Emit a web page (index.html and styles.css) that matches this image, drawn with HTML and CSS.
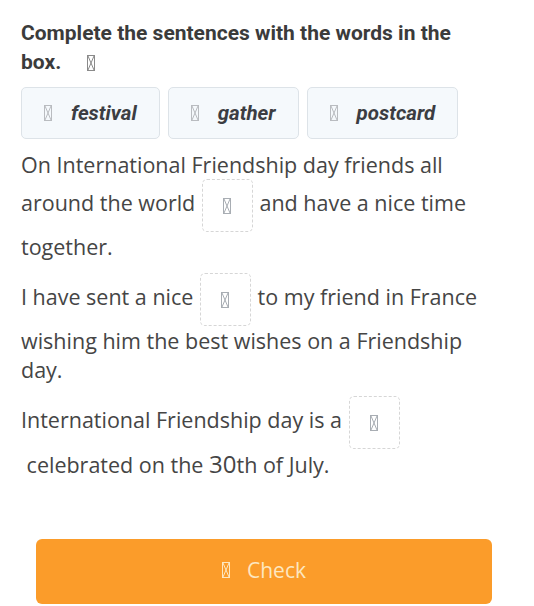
FILE: index.html
```html
<!DOCTYPE html>
<html>
<head>
<meta charset="utf-8">
<link rel="stylesheet" href="styles.css">
</head>
<body>
<div class="page">
  <h1 class="title">Complete the sentences with the words in the box.<svg class="tofu tofu-title" viewBox="0 0 8 16"><rect x="0.5" y="0.5" width="7" height="15"/><path d="M1 1 L7 15 M7 1 L1 15"/></svg></h1>
  <div class="chips">
    <div class="chip"><svg class="tofu tofu-chip" viewBox="0 0 8 16"><rect x="0.5" y="0.5" width="7" height="15"/><path d="M1 1 L7 15 M7 1 L1 15"/></svg><span>festival</span></div>
    <div class="chip"><svg class="tofu tofu-chip" viewBox="0 0 8 16"><rect x="0.5" y="0.5" width="7" height="15"/><path d="M1 1 L7 15 M7 1 L1 15"/></svg><span>gather</span></div>
    <div class="chip"><svg class="tofu tofu-chip" viewBox="0 0 8 16"><rect x="0.5" y="0.5" width="7" height="15"/><path d="M1 1 L7 15 M7 1 L1 15"/></svg><span>postcard</span></div>
  </div>
  <p class="sentence">On International Friendship day friends all around the world <span class="blank"><svg class="tofu tofu-blank" viewBox="0 0 8 16"><rect x="0.5" y="0.5" width="7" height="15"/><path d="M1 1 L7 15 M7 1 L1 15"/></svg></span> and have a nice time together.</p>
  <p class="sentence">I have sent a nice <span class="blank"><svg class="tofu tofu-blank" viewBox="0 0 8 16"><rect x="0.5" y="0.5" width="7" height="15"/><path d="M1 1 L7 15 M7 1 L1 15"/></svg></span> to my friend in France wishing him the best wishes on a Friendship day.</p>
  <p class="sentence">International Friendship day is a <span class="blank"><svg class="tofu tofu-blank" viewBox="0 0 8 16"><rect x="0.5" y="0.5" width="7" height="15"/><path d="M1 1 L7 15 M7 1 L1 15"/></svg></span> &nbsp;celebrated on the <span class="num">30</span>th of July.</p>
  <button class="check"><svg class="tofu tofu-btn" viewBox="0 0 8 16"><rect x="0.5" y="0.5" width="7" height="15"/><path d="M1 1 L7 15 M7 1 L1 15"/></svg><span>Check</span></button>
</div>
</body>
</html>
```
FILE: styles.css
```css
* { box-sizing: border-box; }
html, body { margin: 0; padding: 0; background: #fff; }
.page {
  padding: 19px 0 0 21px;
  width: 490px;
}
.title {
  font-family: Roboto, "Liberation Sans", sans-serif;
  font-weight: 700;
  font-size: 21px;
  line-height: 29px;
  color: #3b3b3b;
  margin: 0;
}
.tofu {
  fill: none;
  stroke-width: 1;
  display: inline-block;
}
.tofu-title {
  width: 8px;
  height: 16px;
  margin-left: 26px;
  stroke: #8a8a8a;
  vertical-align: -2px;
}
.chips {
  display: flex;
  gap: 8px;
  margin-top: 10px;
}
.chip {
  height: 52px;
  display: flex;
  align-items: center;
  gap: 19px;
  padding: 0 22px 0 22px;
  background: #f5f9fc;
  border: 1px solid #dde3e8;
  border-radius: 5px;
  font-family: Roboto, "Liberation Sans", sans-serif;
  font-weight: 700;
  font-style: italic;
  font-size: 20.5px;
  color: #3b3d42;
}
.tofu-chip {
  width: 8px;
  height: 16px;
  stroke: #b9bcc0;
}
.sentence {
  font-family: "Open Sans", "Liberation Sans", sans-serif;
  font-size: 21.5px;
  line-height: 29px;
  color: #454545;
  margin: 11px 0 12px;
}
.blank {
  display: inline-flex;
  align-items: center;
  justify-content: center;
  width: 51px;
  height: 53px;
  border: 1px dashed #d6d6d6;
  border-radius: 5px;
  vertical-align: middle;
  margin: 0 1px;
}
.tofu-blank {
  width: 8px;
  height: 16px;
  stroke: #a8adb3;
}
.num { font-size: 24px; }
.check {
  display: flex;
  align-items: center;
  justify-content: center;
  gap: 17px;
  width: 456px;
  height: 65px;
  margin: 60px 0 0 15px;
  background: #fb9c2a;
  border: none;
  border-radius: 6px;
  font-family: "Open Sans", "Liberation Sans", sans-serif;
  font-size: 21px;
  color: #fde7c0;
  padding: 0 0 4px 0;
}
.tofu-btn {
  width: 8px;
  height: 16px;
  stroke: #fde7c0;
}
```
